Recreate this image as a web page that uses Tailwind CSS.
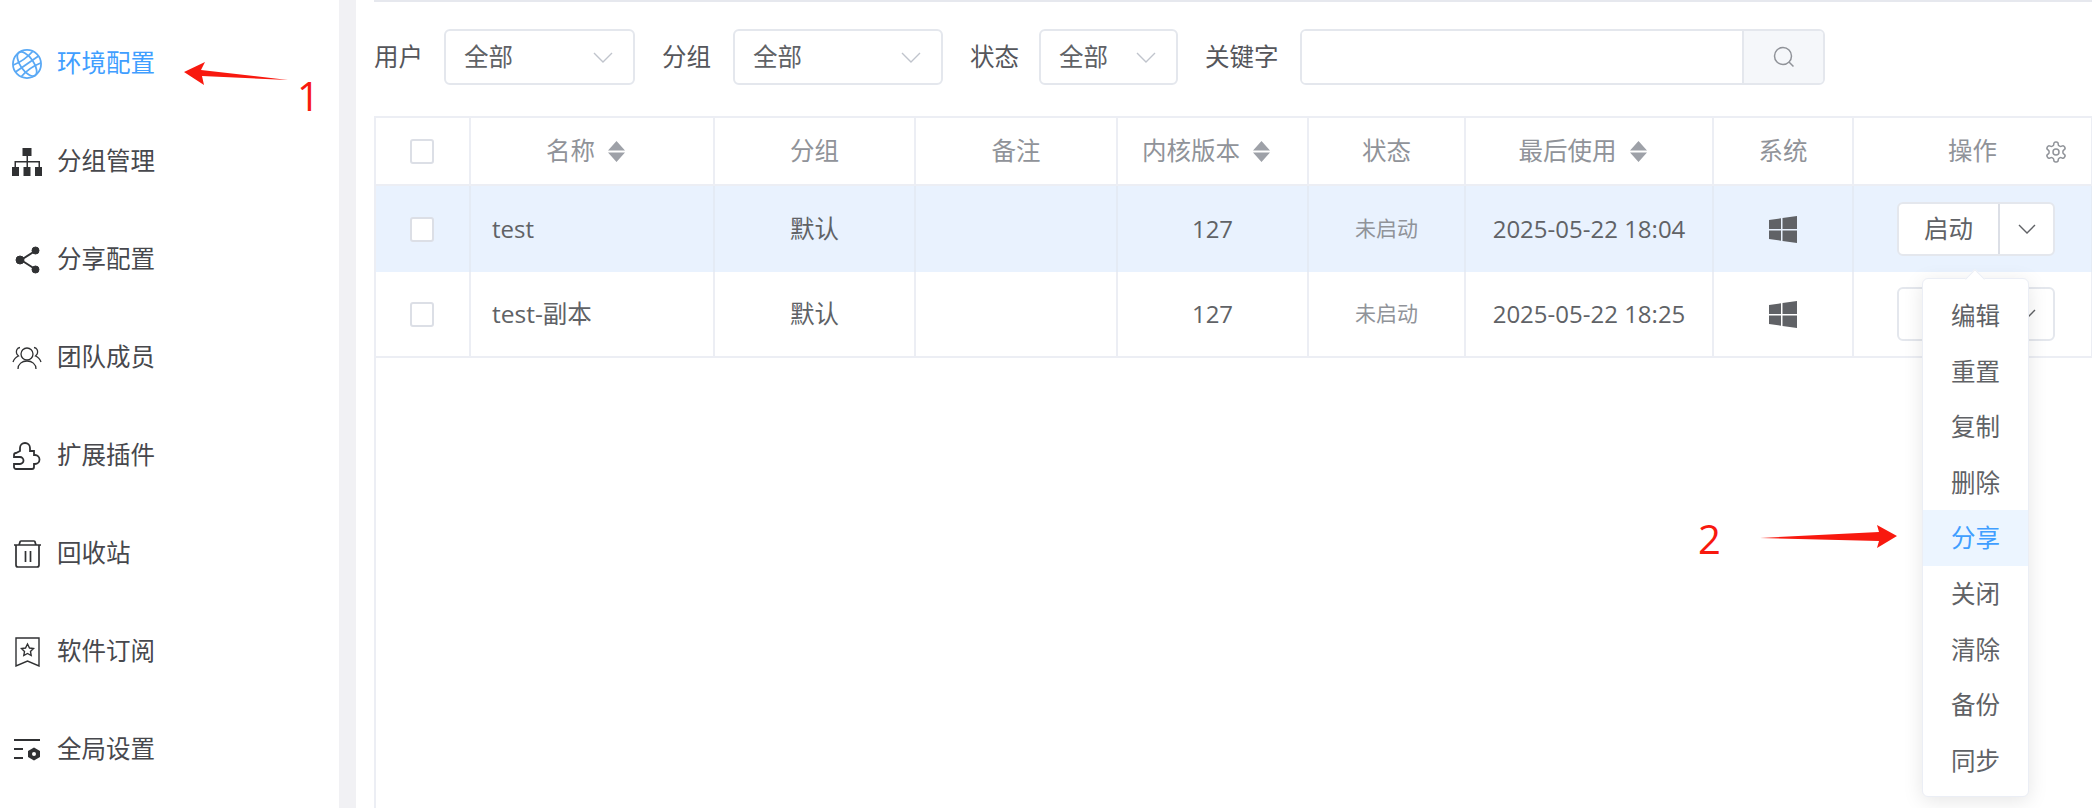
<!DOCTYPE html>
<html lang="zh-CN">
<head>
    <meta charset="UTF-8">
    <title>环境配置</title>
    <script src="https://cdn.jsdelivr.net/npm/@tailwindcss/browser@4"></script>
</head>
<body class="relative w-[2092px] h-[808px] overflow-hidden bg-white text-[24.500px] text-[#606266] font-['Open_Sans','Noto_Sans_CJK_SC',sans-serif]">

<div class="flex h-full">

    <!-- sidebar -->
    <nav class="w-[339px] shrink-0 pt-[14.500px] pl-[12px] text-[#47484d]">
        <a class="flex items-center gap-[15px] h-[98px] text-[#409eff]">
            <svg class="w-[30px] h-[32px]" viewBox="0 0 32 32" fill="none" stroke="#5aa9f5" stroke-width="1.900">
                <circle cx="16" cy="16" r="15"/>
                <g transform="rotate(-35 16 16)">
                    <ellipse cx="16" cy="16" rx="7" ry="15"/>
                    <path d="M1 16h30M3.500 8.500q12.500 3 25 0M3.500 23.500q12.500 -3 25 0"/>
                </g>
            </svg>
            <span>环境配置</span>
        </a>
        <a class="flex items-center gap-[15px] h-[98px]">
            <svg class="w-[30px] h-[28px]" viewBox="0 0 30 28" fill="#303133">
                <rect x="10.500" y="0" width="9" height="8"/>
                <path d="M14.500 8h1.500v5h12v6h-1.500v-4.500h-10.500v4.500h-1.500v-4.500h-10.500v4.500h-1.500v-6h12z"/>
                <rect x="0" y="19" width="7" height="9"/>
                <rect x="11.500" y="19" width="7" height="9"/>
                <rect x="23" y="19" width="7" height="9"/>
            </svg>
            <span>分组管理</span>
        </a>
        <a class="flex items-center gap-[15px] h-[98px]">
            <svg class="w-[30px] h-[28px]" viewBox="0 0 30 28" fill="#303133" stroke="#303133">
                <path d="M9 14 23 5M9 14l14 9" stroke-width="2" fill="none"/>
                <circle cx="8" cy="14" r="4"/>
                <circle cx="23.500" cy="4.500" r="3.500"/>
                <circle cx="23.500" cy="23.500" r="3.500"/>
            </svg>
            <span>分享配置</span>
        </a>
        <a class="flex items-center gap-[15px] h-[98px]">
            <svg class="w-[30px] h-[24px]" viewBox="0 0 30 24" fill="none" stroke="#303133" stroke-width="1.300">
                <circle cx="15" cy="8" r="6"/>
                <path d="M6 23c0-5 4-8 9-8s9 3 9 8M8 1.500c-3 .5-4 3-3.500 5.500 0 1 1 2 2 3-2.500 1-4.500 3-5.500 6M22 1.500c3 .5 4 3 3.500 5.500 0 1-1 2-2 3 2.500 1 4.500 3 5.500 6"/>
            </svg>
            <span>团队成员</span>
        </a>
        <a class="flex items-center gap-[15px] h-[98px]">
            <svg class="w-[30px] h-[28px]" viewBox="0 0 30 28" fill="none" stroke="#303133" stroke-width="1.800">
                <path d="M8 9V6a5 5 0 0 1 10 0v3h4v4h1a4.500 4.500 0 0 1 0 9h-1v3a2 2 0 0 1-2 2H4a2 2 0 0 1-2-2v-3h6a3 3 0 0 0 0-7H2v-2a2 2 0 0 1 2-2z"/>
            </svg>
            <span>扩展插件</span>
        </a>
        <a class="flex items-center gap-[15px] h-[98px]">
            <svg class="w-[30px] h-[28px]" viewBox="0 0 30 28" fill="none" stroke="#303133" stroke-width="1.700">
                <path d="M2 5h27M7 5l1-3a1 1 0 0 1 1-1h13a1 1 0 0 1 1 1l1 3M4 5v20a2 2 0 0 0 2 2h19a2 2 0 0 0 2-2V5M13.500 11v11M18.500 11v11"/>
            </svg>
            <span>回收站</span>
        </a>
        <a class="flex items-center gap-[15px] h-[98px]">
            <svg class="w-[30px] h-[30px]" viewBox="0 0 30 30" fill="none" stroke="#303133" stroke-width="1.400">
                <path d="M4 1h23v28L15.500 24 4 29z"/>
                <path d="M15.500 7l2 4 4 .5-3 3 .7 4-3.700-2-3.700 2 .7-4-3-3 4-.5z"/>
            </svg>
            <span>软件订阅</span>
        </a>
        <a class="flex items-center gap-[15px] h-[98px]">
            <svg class="w-[30px] h-[24px]" viewBox="0 0 30 24" fill="none" stroke="#303133" stroke-width="2">
                <path d="M2 2h26M2 11h9M2 20h9"/>
                <path d="M22 9.500l6 3.500v6l-6 3.500-6-3.500v-6z" fill="#303133" stroke="none"/>
                <circle cx="22" cy="16" r="2" fill="#fff" stroke="none"/>
            </svg>
            <span>全局设置</span>
        </a>
    </nav>

    <div class="w-[17px] shrink-0 bg-[#f1f1f4]"></div>

    <!-- main -->
    <main class="flex-1 pl-[18px] flex flex-col">
        <div class="h-[2px] bg-[#e6e8ee]"></div>

        <div class="flex items-center h-[56px] mt-[27px] mb-[31px] text-[#55565b]">
            <span class="w-[70px]">用户</span>
            <div class="w-[191px] h-[56px] pl-[18px] pr-[20px] flex items-center justify-between border-2 border-[#e4e7ed] rounded-[6px] text-[#606266]">
                <span>全部</span>
                <svg class="w-[20px] h-[11px]" viewBox="0 0 20 11" fill="none" stroke="#c0c4cc" stroke-width="1.400"><path d="M1 1l9 9 9-9"/></svg>
            </div>
            <span class="ml-[27px] w-[71px]">分组</span>
            <div class="w-[210px] h-[56px] pl-[18px] pr-[20px] flex items-center justify-between border-2 border-[#e4e7ed] rounded-[6px] text-[#606266]">
                <span>全部</span>
                <svg class="w-[20px] h-[11px]" viewBox="0 0 20 11" fill="none" stroke="#c0c4cc" stroke-width="1.400"><path d="M1 1l9 9 9-9"/></svg>
            </div>
            <span class="ml-[27px] w-[69px]">状态</span>
            <div class="w-[139px] h-[56px] pl-[18px] pr-[20px] flex items-center justify-between border-2 border-[#e4e7ed] rounded-[6px] text-[#606266]">
                <span>全部</span>
                <svg class="w-[20px] h-[11px]" viewBox="0 0 20 11" fill="none" stroke="#c0c4cc" stroke-width="1.400"><path d="M1 1l9 9 9-9"/></svg>
            </div>
            <span class="ml-[27px] w-[95px]">关键字</span>
            <div class="w-[525px] h-[56px] flex border-2 border-[#e4e7ed] rounded-[6px] overflow-hidden">
                <div class="flex-1 bg-white"></div>
                <div class="w-[81px] flex items-center justify-center bg-[#f5f7fa] border-l-2 border-[#e4e7ed]">
                    <svg class="w-[22px] h-[22px]" viewBox="0 0 22 22" fill="none" stroke="#909399" stroke-width="1.500"><circle cx="10" cy="10" r="8.500"/><path d="M16 16l4.500 4.500"/></svg>
                </div>
            </div>
        </div>

        <div class="flex-1 border-l-2 border-[#eceef4]">
            <table class="table-fixed w-[1716px] border-collapse text-center">
                <colgroup>
                    <col class="w-[94px]"><col class="w-[244px]"><col class="w-[201px]"><col class="w-[202px]"><col class="w-[191px]"><col class="w-[157px]"><col class="w-[248px]"><col class="w-[140px]"><col class="w-[239px]">
                </colgroup>
                <thead class="text-[#909399]">
                    <tr class="h-[68px] border-y-2 border-[#eceef4] [&>th]:font-normal [&>th]:border-r-2 [&>th]:border-[#eceef4]">
                        <th><span class="block ml-[34px] w-[24px] h-[25px] bg-white border-2 border-[#dcdfe6] rounded-[3px]"></span></th>
                        <th><span class="inline-flex items-center gap-[13px] mr-[13px]">名称<svg class="w-[17px] h-[21px]" viewBox="0 0 17 21" fill="#9ea1a8"><path d="M8.500 0l8.500 9.500H0zM8.500 21l8.500-9.500H0z"/></svg></span></th>
                        <th>分组</th>
                        <th>备注</th>
                        <th><span class="inline-flex items-center gap-[13px] mr-[13px]">内核版本<svg class="w-[17px] h-[21px]" viewBox="0 0 17 21" fill="#9ea1a8"><path d="M8.500 0l8.500 9.500H0zM8.500 21l8.500-9.500H0z"/></svg></span></th>
                        <th>状态</th>
                        <th><span class="inline-flex items-center gap-[13px] mr-[13px]">最后使用<svg class="w-[17px] h-[21px]" viewBox="0 0 17 21" fill="#9ea1a8"><path d="M8.500 0l8.500 9.500H0zM8.500 21l8.500-9.500H0z"/></svg></span></th>
                        <th>系统</th>
                        <th class="relative">操作
                            <svg class="absolute right-[23px] top-[22px] w-[24px] h-[24px]" viewBox="0 0 24 24" fill="none" stroke="#909399" stroke-width="1.500"><path d="M12.220 2h-.44a2 2 0 0 0-2 2v.18a2 2 0 0 1-1 1.730l-.43.25a2 2 0 0 1-2 0l-.15-.08a2 2 0 0 0-2.730.73l-.22.38a2 2 0 0 0 .73 2.730l.15.1a2 2 0 0 1 1 1.720v.51a2 2 0 0 1-1 1.740l-.15.09a2 2 0 0 0-.73 2.730l.22.38a2 2 0 0 0 2.730.73l.15-.08a2 2 0 0 1 2 0l.43.25a2 2 0 0 1 1 1.730V20a2 2 0 0 0 2 2h.44a2 2 0 0 0 2-2v-.18a2 2 0 0 1 1-1.730l.43-.25a2 2 0 0 1 2 0l.15.08a2 2 0 0 0 2.730-.73l.22-.39a2 2 0 0 0-.73-2.730l-.15-.08a2 2 0 0 1-1-1.740v-.5a2 2 0 0 1 1-1.740l.15-.09a2 2 0 0 0 .73-2.730l-.22-.38a2 2 0 0 0-2.730-.73l-.15.08a2 2 0 0 1-2 0l-.43-.25a2 2 0 0 1-1-1.730V4a2 2 0 0 0-2-2z"/><circle cx="12" cy="12" r="3"/></svg>
                        </th>
                    </tr>
                </thead>
                <tbody>
                    <tr class="h-[87px] bg-[#e9f2fe] [&>td]:border-r-2 [&>td]:border-[#e4ebf5]">
                        <td><span class="block ml-[34px] w-[24px] h-[25px] bg-white border-2 border-[#dcdfe6] rounded-[3px]"></span></td>
                        <td class="text-left pl-[21px] text-[24px]">test</td>
                        <td>默认</td>
                        <td></td>
                        <td class="text-[24px]">127</td>
                        <td class="text-[21px] text-[#909399]">未启动</td>
                        <td class="text-[24px]">2025-05-22 18:04</td>
                        <td><svg class="block mx-auto w-[28px] h-[27px]" viewBox="0 0 28 27" fill="#606266"><path d="M0 4l12-1.700V13H0zM13.500 2l14.500-2v13H13.500zM0 14.500h12v10.200L0 23zM13.500 14.500H28V27l-14.500-2z"/></svg></td>
                        <td>
                            <div class="ml-[43px] w-[158px] h-[54px] flex bg-white border-2 border-[#e4e7ed] rounded-[6px]">
                                <span class="flex-1 flex items-center justify-center border-r-2 border-[#dcdfe6]">启动</span>
                                <span class="w-[53px] flex items-center justify-center"><svg class="w-[18px] h-[10px]" viewBox="0 0 18 10" fill="none" stroke="#606266" stroke-width="1.400"><path d="M1 1l8 8 8-8"/></svg></span>
                            </div>
                        </td>
                    </tr>
                    <tr class="h-[85px] border-b-2 border-[#eceef4] [&>td]:border-r-2 [&>td]:border-[#eceef4]">
                        <td><span class="block ml-[34px] w-[24px] h-[25px] bg-white border-2 border-[#dcdfe6] rounded-[3px]"></span></td>
                        <td class="text-left pl-[21px]">test-副本</td>
                        <td>默认</td>
                        <td></td>
                        <td class="text-[24px]">127</td>
                        <td class="text-[21px] text-[#909399]">未启动</td>
                        <td class="text-[24px]">2025-05-22 18:25</td>
                        <td><svg class="block mx-auto w-[28px] h-[27px]" viewBox="0 0 28 27" fill="#606266"><path d="M0 4l12-1.700V13H0zM13.500 2l14.500-2v13H13.500zM0 14.500h12v10.200L0 23zM13.500 14.500H28V27l-14.500-2z"/></svg></td>
                        <td>
                            <div class="ml-[43px] w-[158px] h-[54px] flex bg-white border-2 border-[#e4e7ed] rounded-[6px]">
                                <span class="flex-1 flex items-center justify-center border-r-2 border-[#dcdfe6]">启动</span>
                                <span class="w-[53px] flex items-center justify-center"><svg class="w-[18px] h-[10px]" viewBox="0 0 18 10" fill="none" stroke="#606266" stroke-width="1.400"><path d="M1 1l8 8 8-8"/></svg></span>
                            </div>
                        </td>
                    </tr>
                </tbody>
            </table>
        </div>
    </main>
</div>

<!-- dropdown menu -->
<div class="absolute left-[1922px] top-[278px] w-[107px] h-[519px] pt-[9px] bg-white border border-[#ebeef5] rounded-[6px] shadow-[0_4px_20px_rgba(0,0,0,0.1)] text-center">
    <span class="absolute left-[45px] -top-[7px] w-[14px] h-[14px] bg-white rotate-45 border-l border-t border-[#ebeef5]"></span>
    <div class="relative h-[55.600px] leading-[55.600px]">编辑</div>
    <div class="h-[55.600px] leading-[55.600px]">重置</div>
    <div class="h-[55.600px] leading-[55.600px]">复制</div>
    <div class="h-[55.600px] leading-[55.600px]">删除</div>
    <div class="h-[55.600px] leading-[55.600px] bg-[#ecf5ff] text-[#409eff]">分享</div>
    <div class="h-[55.600px] leading-[55.600px]">关闭</div>
    <div class="h-[55.600px] leading-[55.600px]">清除</div>
    <div class="h-[55.600px] leading-[55.600px]">备份</div>
    <div class="h-[55.600px] leading-[55.600px]">同步</div>
</div>

<!-- red annotations on top of the screenshot -->
<svg class="absolute inset-0 w-[2092px] h-[808px] pointer-events-none" viewBox="0 0 2092 808" fill="#f8190f">
    <path d="M184 72 205 62 201 70 288 80 202 76 204 85z"/>
    <path d="M1760 538 1879 532 1877 525 1897 536 1877 548 1879 541z"/>
</svg>
<span class="absolute left-[297px] top-[70px] text-[40px] leading-[52px] text-[#f8190f]">1</span>
<span class="absolute left-[1698px] top-[513px] text-[40px] leading-[52px] text-[#f8190f]">2</span>

</body>
</html>
